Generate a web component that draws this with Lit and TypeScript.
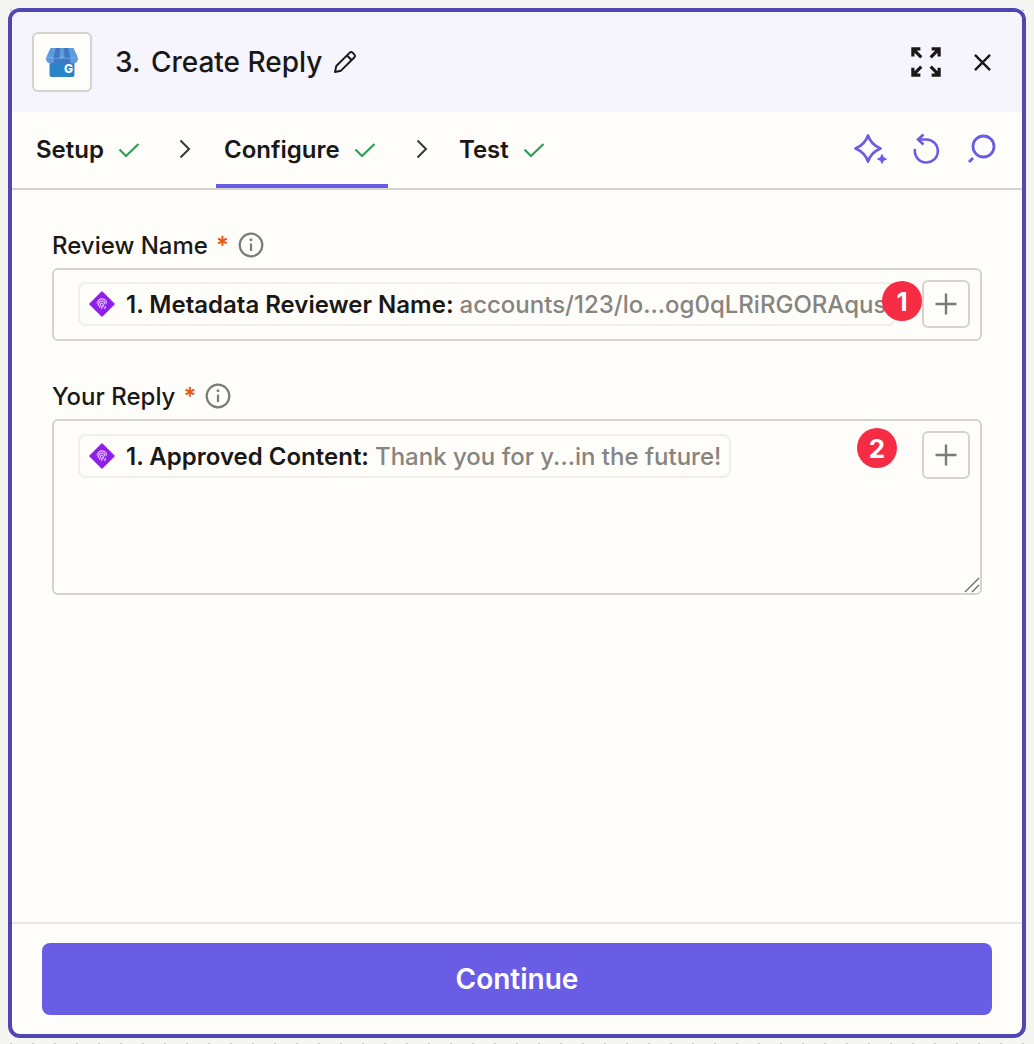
import { LitElement, html, css, svg } from "lit";
import { customElement } from "lit/decorators.js";

const check = html`<svg class="check" viewBox="0 0 22 22" fill="none" stroke="#2f9e57" stroke-width="2.2"><path d="M1.5 10.5 8 17 20.5 5"/></svg>`;
const chevron = html`<svg class="chev" viewBox="0 0 14 20" fill="none" stroke="#3a3836" stroke-width="2"><path d="M2.5 1.5 11 10l-8.500 8.500"/></svg>`;
const info = html`<svg class="info" viewBox="0 0 26 26" fill="none" stroke="#7d7b76" stroke-width="2.200"><circle cx="13" cy="13" r="11.300"/><path d="M13 11.500V19" /><path d="M13 6.500v2.400" stroke-width="2.600"/></svg>`;
const plus = html`<svg viewBox="0 0 22 22" width="22" height="22" fill="none" stroke="#7d7b76" stroke-width="2.400"><path d="M11 .5v21M.5 11h21"/></svg>`;
const diamond = html`<svg class="dia" viewBox="0 0 28 28"><path d="M14 2 26 14 14 26 2 14z" fill="#8f1fe8" stroke="#8f1fe8" stroke-linejoin="round" stroke-width="1.500"/><g fill="none" stroke="#e3cffb" stroke-width="1.100"><path d="M9 13.500c1-3 3-5 6-4.500 2.500.5 3.500 2.500 3.500 4.500"/><path d="M10 16c.5-3 1.500-5 4.500-5 2 0 2.500 2 2.500 3.500"/><path d="M11.500 18c.5-2 .5-5 2.500-5 1.500 0 1.500 2 1 4"/><path d="M13.500 19c.5-1 .5-3 .5-4"/><path d="M17.500 16c0 1-.5 2-1 3"/></g></svg>`;
const store = svg`
  <path d="M8 17h28v17a2 2 0 0 1-2 2H10a2 2 0 0 1-2-2z" fill="#2a84c9"/>
  <path d="M9 6h26l5 10H4z" fill="#5f9bdc"/>
  <path d="M15 6h5l-1 11h-7zM24 6h5l3 11h-7z" fill="#3f78c4"/>
  <path d="M4 16h36v1a5 5 0 0 1-5 5 5 5 0 0 1-4-2 5 5 0 0 1-9 0 5 5 0 0 1-9 0 5 5 0 0 1-4 2 5 5 0 0 1-5-5z" fill="#5f9bdc"/>
  <path d="M13 17h9v2.500a4.500 4.500 0 0 1-9 0zM22 17h9v2.500a4.500 4.500 0 0 1-9 0z" fill="#3f78c4"/>
`;

@customElement("app-root")
export class AppRoot extends LitElement {
  static styles = css`
    :host { display: block; width: 1034px; height: 1044px; overflow: hidden; font-family: Inter, "Liberation Sans", sans-serif; color: #1a1817;
      background-color: #f5f5f2; background-image: radial-gradient(circle, #cfcdc8 1px, transparent 1.400px); background-size: 22px 22px; background-position: 0 -1px; }
    .wrap { padding: 8px 8px 6px 8px; height: 100%; box-sizing: border-box; }
    .card { height: 100%; box-sizing: border-box; border: 4px solid #5046b4; border-radius: 12px; background: #fffdf9; display: flex; flex-direction: column; overflow: hidden; }
    .head { height: 100px; flex: none; background: #f6f5fd; display: flex; align-items: center; padding: 0 31px 0 20px; box-sizing: border-box; }
    .logo { width: 60px; height: 60px; box-sizing: border-box; border: 2px solid #d5d3ce; border-radius: 6px; background: #fffdf9; display: flex; align-items: center; justify-content: center; position: relative; }
    .logo svg { width: 32px; height: 29px; display: block; }
    .g { position: absolute; left: 30px; top: 28px; font-size: 12px; font-weight: 800; color: #fff; line-height: 14px; }
    .title { font-size: 28px; font-weight: 500; margin-left: 23px; line-height: 36px; }
    .num { margin-right: 3px; }
    .pencil { width: 24px; height: 24px; margin-left: 11px; }
    .spacer { flex: 1; }
    .expand { width: 30px; height: 30px; margin-right: 33px; }
    .close { width: 17px; height: 17px; }
    .tabs { height: 78px; flex: none; border-bottom: 2px solid #d5d3ce; box-sizing: border-box; display: flex; align-items: stretch; padding: 0 24px 0 24px; }
    .tab { display: flex; align-items: center; font-size: 24px; font-weight: 600; gap: 14px; position: relative; padding-bottom: 2px; }
    .t1 { margin-right: 38px; }
    .t2 { margin-left: 24px; margin-right: 27px; padding: 2px 8px 0; width: 172px; box-sizing: border-box; border-bottom: 4px solid #695de6; }
    .t3 { margin-left: 30px; }
    .chev { width: 14px; height: 20px; margin-top: -2px; align-self: center; }
    .check { width: 22px; height: 22px; margin-top: 2px; }
    .acts { display: flex; margin-left: auto; gap: 22px; align-items: center; padding-bottom: 2px; }
    .acts svg { width: 34px; height: 34px; display: block; overflow: visible; }
    .body { flex: 1; padding: 39px 40px 0 40px; min-height: 0; }
    .field { margin-bottom: 39px; }
    .label { font-size: 24px; font-weight: 500; color: #1a1817; display: flex; align-items: center; height: 32px; margin-bottom: 7px; }
    .star { color: #e8590c; margin-left: 8px; font-size: 24px; font-weight: 600; }
    .info { width: 26px; height: 26px; margin-left: 9px; }
    .box { border: 2px solid #d5d3ce; border-radius: 6px; box-sizing: border-box; padding: 10px 10px 0 24px; display: flex; position: relative; }
    .short { height: 73px; }
    .tall { height: 176px; }
    .pill { height: 44px; box-sizing: border-box; border: 2px solid #efeeea; border-radius: 8px; display: flex; align-items: center; padding: 0 8px; font-size: 24px; white-space: nowrap; overflow: hidden; font-weight: 600; margin-top: 2px; }
    .short .pill { width: 818px; flex: none; padding-right: 0; }
    .tall .pill { margin-top: 3px; }
    .dia { width: 28px; height: 28px; flex: none; margin-right: 10px; }
    .val { color: #86847f; font-weight: 500; margin-left: 6px; }
    .add { margin-left: auto; width: 48px; height: 48px; box-sizing: border-box; border: 2px solid #d5d3ce; border-radius: 6px; display: flex; align-items: center; justify-content: center; flex: none; }
    .badge { position: absolute; width: 40px; height: 40px; border-radius: 50%; background: #f62c45; color: #fff; font-size: 26px; font-weight: 700; display: flex; align-items: center; justify-content: center; }
    .b1 { left: 828px; top: 11px; }
    .b2 { left: 803px; top: 7px; }
    .grip { position: absolute; right: 0; bottom: 0; width: 16px; height: 16px; }
    .foot { flex: none; height: 112px; border-top: 2px solid #e8e7e2; box-sizing: border-box; padding: 19px 30px 0 30px; }
    .btn { height: 72px; background: #695de6; color: #fff; font-size: 28px; font-weight: 600; border-radius: 8px; display: flex; align-items: center; justify-content: center; }
  `;

  render() {
    return html`<div class="wrap"><div class="card">
      <div class="head">
        <div class="logo"><svg viewBox="4 6 36 30" preserveAspectRatio="none">${store}</svg><span class="g">G</span></div>
        <div class="title"><span class="num">3.</span> Create Reply</div>
        <svg class="pencil" viewBox="0 0 24 24" fill="none" stroke="#1a1817" stroke-width="1.900" stroke-linejoin="round"><path d="M2 22l1.300-6L16.500 2.800a2.300 2.300 0 0 1 3.200 0l1.500 1.500a2.300 2.300 0 0 1 0 3.200L8 20.700z"/><path d="M14 5.500l4.500 4.500"/></svg>
        <div class="spacer"></div>
        <svg class="expand" viewBox="0 0 32 32" fill="none" stroke="#1a1817" stroke-width="3.400"><path d="M2 10V2h8M2 2l9 9M22 2h8v8M30 2l-9 9M2 22v8h8M2 30l9-9M22 30h8v-8M30 30l-9-9"/></svg>
        <svg class="close" viewBox="0 0 18 18" fill="none" stroke="#1a1817" stroke-width="2.500"><path d="M1 1l16 16M17 1 1 17"/></svg>
      </div>
      <div class="tabs">
        <div class="tab t1">Setup ${check}</div>${chevron}
        <div class="tab t2">Configure ${check}</div>${chevron}
        <div class="tab t3">Test ${check}</div>
        <div class="acts">
          <svg viewBox="0 0 34 34" fill="none" stroke="#695de6" stroke-width="2.700" stroke-linejoin="round"><path d="M14 3.500Q17 12.500 26.500 16.500 17 20.500 14 29.500 11 20.500 1.500 16.500 11 12.500 14 3.500z"/><path d="M28 22.500c.7 2.400 1.700 3.400 4.500 4.500-2.800 1.100-3.800 2.100-4.500 4.500-.7-2.400-1.700-3.400-4.500-4.500 2.800-1.100 3.800-2.100 4.500-4.500z" fill="#695de6" stroke-width="1"/></svg>
          <svg viewBox="0 0 34 34" fill="none" stroke="#695de6" stroke-width="2.600"><path d="M9 7.500h7a11.500 11.500 0 1 1-11 9.500"/><path d="M13.500 2.500 8 7.500l5.500 5" /></svg>
          <svg viewBox="0 0 34 34" fill="none" stroke="#695de6" stroke-width="2.800" style="margin-left:-2px"><circle cx="19.500" cy="14.500" r="10.500"/><path d="M5 30l4-4"/></svg>
        </div>
      </div>
      <div class="body">
        <div class="field">
          <div class="label">Review Name<span class="star">*</span>${info}</div>
          <div class="box short">
            <div class="pill">${diamond}1. Metadata Reviewer Name:<span class="val">accounts/123/lo...og0qLRiRGORAqus</span></div>
            <div class="add">${plus}</div>
            <div class="badge b1">1</div>
          </div>
        </div>
        <div class="field">
          <div class="label">Your Reply<span class="star">*</span>${info}</div>
          <div class="box tall">
            <div class="pill">${diamond}1. Approved Content:<span class="val">Thank you for y...in the future!</span></div>
            <div class="add">${plus}</div>
            <div class="badge b2">2</div>
            <svg class="grip" viewBox="0 0 16 16" fill="none" stroke="#6e6c68" stroke-width="1.400"><path d="M1 15 15 1M8 15l7-7"/></svg>
          </div>
        </div>
      </div>
      <div class="foot"><div class="btn">Continue</div></div>
    </div></div>`;
  }
}
